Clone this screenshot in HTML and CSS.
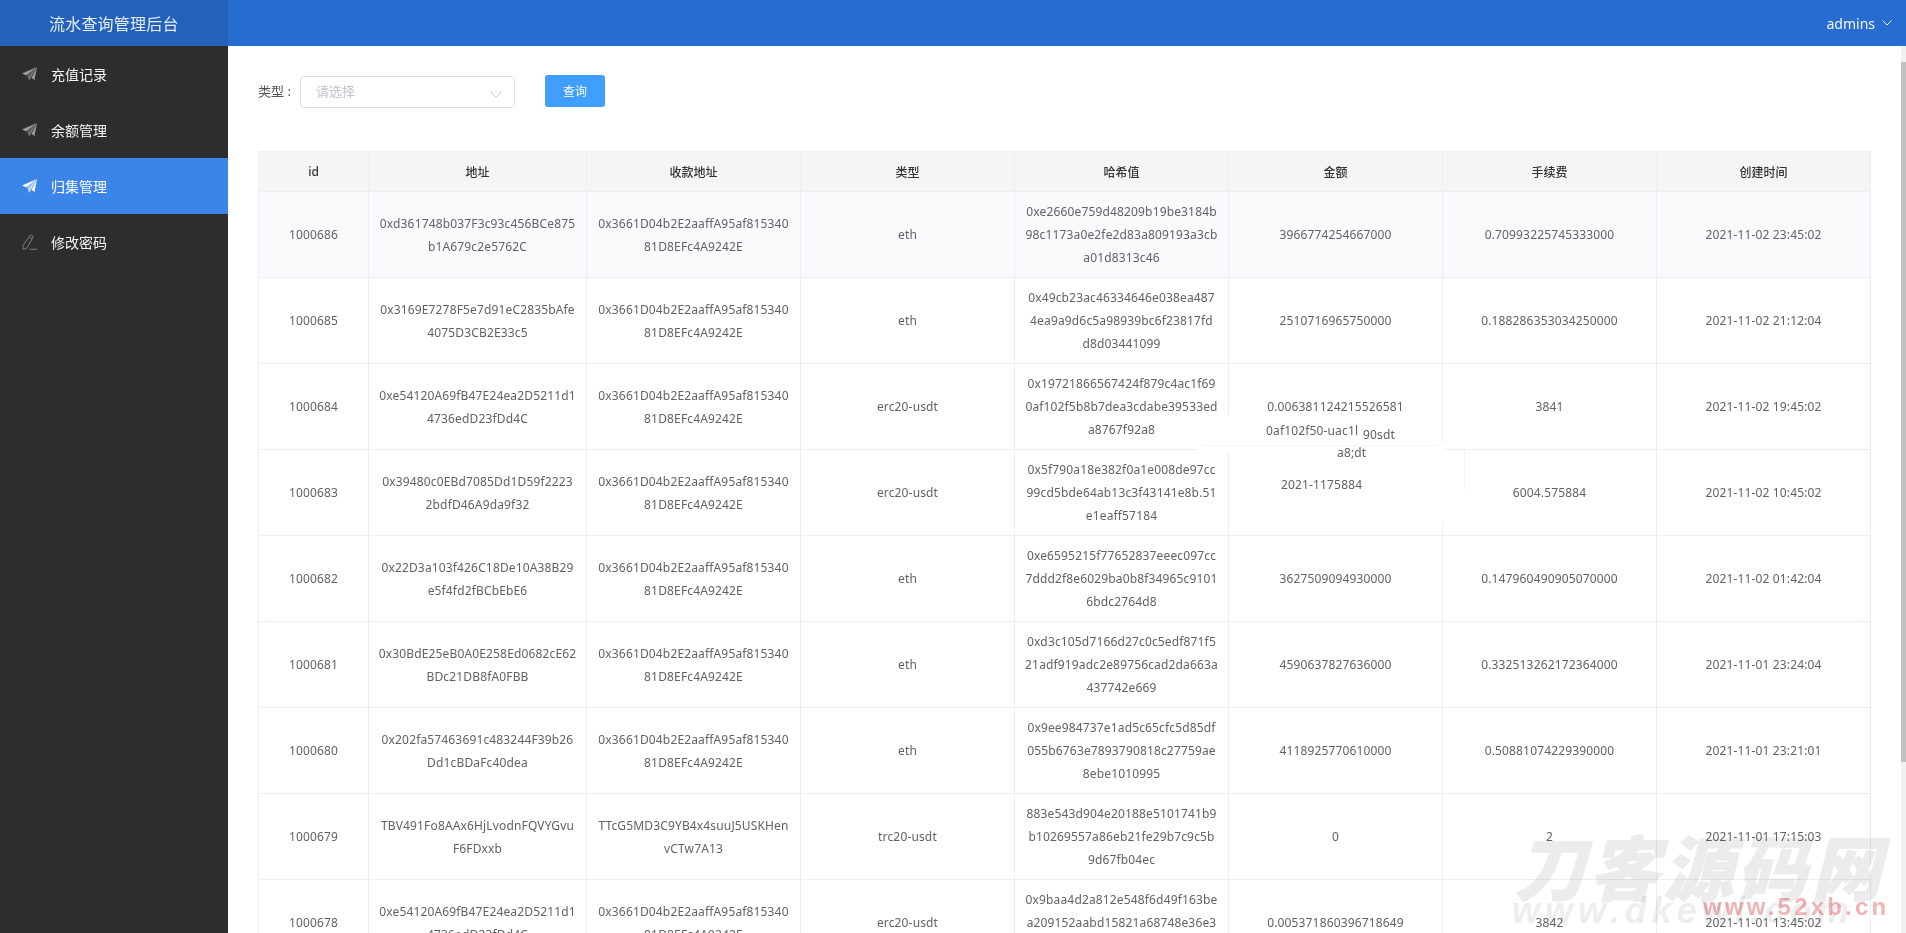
FILE: index.html
```html
<!DOCTYPE html>
<html lang="zh-CN">
<head>
<meta charset="utf-8">
<title>流水查询管理后台</title>
<link rel="stylesheet" href="styles.css">
</head>
<body>
<div class="app">
  <header class="topbar">
    <div class="logo">流水查询管理后台</div>
    <div class="user">admins
      <svg class="user-caret" viewBox="0 0 10 6"><path d="M0.5 0.5 5 5 9.5 0.5"/></svg>
    </div>
  </header>
  <div class="body">
    <nav class="sidebar">
      <a class="menu-item">
        <svg class="menu-icon" viewBox="0 0 15 14"><path d="M15 0 0 6.5 4.5 8.5Z"/><path class="facet" d="M15 0 5.5 9 7 14 8.8 11.3Z"/><path d="M15 0 9.6 11 12.5 13Z"/></svg>
        <span>充值记录</span>
      </a>
      <a class="menu-item">
        <svg class="menu-icon" viewBox="0 0 15 14"><path d="M15 0 0 6.5 4.5 8.5Z"/><path class="facet" d="M15 0 5.5 9 7 14 8.8 11.3Z"/><path d="M15 0 9.6 11 12.5 13Z"/></svg>
        <span>余额管理</span>
      </a>
      <a class="menu-item active">
        <svg class="menu-icon" viewBox="0 0 15 14"><path d="M15 0 0 6.5 4.5 8.5Z"/><path class="facet" d="M15 0 5.5 9 7 14 8.8 11.3Z"/><path d="M15 0 9.6 11 12.5 13Z"/></svg>
        <span>归集管理</span>
      </a>
      <a class="menu-item">
        <svg class="menu-icon pencil" viewBox="0 0 15 16"><path d="M8.5 0.8 11.3 2.6 4.6 14.6 1 15 1.2 11.3Z"/><path d="M7.3 3 10 4.8"/><path d="M7.5 15.3H15"/></svg>
        <span>修改密码</span>
      </a>
    </nav>
    <main class="main">
      <form class="filter">
        <label class="filter-label">类型 :</label>
        <div class="select">
          <span class="placeholder">请选择</span>
          <svg class="select-caret" viewBox="0 0 12 7"><path d="M0.5 0.5 6 6 11.5 0.5"/></svg>
        </div>
        <button type="button" class="btn">查询</button>
      </form>
      <table class="table">
        <colgroup>
          <col class="c-id"><col class="c-addr"><col class="c-to"><col class="c-rest"><col class="c-rest"><col class="c-rest"><col class="c-rest"><col class="c-rest">
        </colgroup>
        <thead>
          <tr><th>id</th><th>地址</th><th>收款地址</th><th>类型</th><th>哈希值</th><th>金额</th><th>手续费</th><th>创建时间</th></tr>
        </thead>
        <tbody>
          <tr class="hover">
            <td>1000686</td><td>0xd361748b037F3c93c456BCe875<br>b1A679c2e5762C</td><td>0x3661D04b2E2aaffA95af815340<br>81D8EFc4A9242E</td><td>eth</td><td>0xe2660e759d48209b19be3184b<br>98c1173a0e2fe2d83a809193a3cb<br>a01d8313c46</td><td>3966774254667000</td><td>0.70993225745333000</td><td>2021-11-02 23:45:02</td>
          </tr>
          <tr>
            <td>1000685</td><td>0x3169E7278F5e7d91eC2835bAfe<br>4075D3CB2E33c5</td><td>0x3661D04b2E2aaffA95af815340<br>81D8EFc4A9242E</td><td>eth</td><td>0x49cb23ac46334646e038ea487<br>4ea9a9d6c5a98939bc6f23817fd<br>d8d03441099</td><td>2510716965750000</td><td>0.188286353034250000</td><td>2021-11-02 21:12:04</td>
          </tr>
          <tr>
            <td>1000684</td><td>0xe54120A69fB47E24ea2D5211d1<br>4736edD23fDd4C</td><td>0x3661D04b2E2aaffA95af815340<br>81D8EFc4A9242E</td><td>erc20-usdt</td><td>0x19721866567424f879c4ac1f69<br>0af102f5b8b7dea3cdabe39533ed<br>a8767f92a8</td><td>0.006381124215526581</td><td>3841</td><td>2021-11-02 19:45:02</td>
          </tr>
          <tr>
            <td>1000683</td><td>0x39480c0EBd7085Dd1D59f2223<br>2bdfD46A9da9f32</td><td>0x3661D04b2E2aaffA95af815340<br>81D8EFc4A9242E</td><td>erc20-usdt</td><td>0x5f790a18e382f0a1e008de97cc<br>99cd5bde64ab13c3f43141e8b.51<br>e1eaff57184</td><td></td><td>6004.575884</td><td>2021-11-02 10:45:02</td>
          </tr>
          <tr>
            <td>1000682</td><td>0x22D3a103f426C18De10A38B29<br>e5f4fd2fBCbEbE6</td><td>0x3661D04b2E2aaffA95af815340<br>81D8EFc4A9242E</td><td>eth</td><td>0xe6595215f77652837eeec097cc<br>7ddd2f8e6029ba0b8f34965c9101<br>6bdc2764d8</td><td>3627509094930000</td><td>0.147960490905070000</td><td>2021-11-02 01:42:04</td>
          </tr>
          <tr>
            <td>1000681</td><td>0x30BdE25eB0A0E258Ed0682cE62<br>BDc21DB8fA0FBB</td><td>0x3661D04b2E2aaffA95af815340<br>81D8EFc4A9242E</td><td>eth</td><td>0xd3c105d7166d27c0c5edf871f5<br>21adf919adc2e89756cad2da663a<br>437742e669</td><td>4590637827636000</td><td>0.332513262172364000</td><td>2021-11-01 23:24:04</td>
          </tr>
          <tr>
            <td>1000680</td><td>0x202fa57463691c483244F39b26<br>Dd1cBDaFc40dea</td><td>0x3661D04b2E2aaffA95af815340<br>81D8EFc4A9242E</td><td>eth</td><td>0x9ee984737e1ad5c65cfc5d85df<br>055b6763e7893790818c27759ae<br>8ebe1010995</td><td>4118925770610000</td><td>0.50881074229390000</td><td>2021-11-01 23:21:01</td>
          </tr>
          <tr>
            <td>1000679</td><td>TBV491Fo8AAx6HjLvodnFQVYGvu<br>F6FDxxb</td><td>TTcG5MD3C9YB4x4suuJ5USKHen<br>vCTw7A13</td><td>trc20-usdt</td><td>883e543d904e20188e5101741b9<br>b10269557a86eb21fe29b7c9c5b<br>9d67fb04ec</td><td>0</td><td>2</td><td>2021-11-01 17:15:03</td>
          </tr>
          <tr>
            <td>1000678</td><td>0xe54120A69fB47E24ea2D5211d1<br>4736edD23fDd4C</td><td>0x3661D04b2E2aaffA95af815340<br>81D8EFc4A9242E</td><td>erc20-usdt</td><td>0x9baa4d2a812e548f6d49f163be<br>a209152aabd15821a68748e36e3<br>d1f04a7c92</td><td>0.005371860396718649</td><td>3842</td><td>2021-11-01 13:45:02</td>
          </tr>
        </tbody>
      </table>
    </main>
  </div>
  <div class="overlay">
    <svg class="patch" viewBox="0 0 290 120">
      <rect class="white" x="3" y="0" width="238" height="33"/>
      <rect class="white" x="32" y="28" width="215" height="80"/>
      <rect class="white" x="0" y="30" width="36" height="8"/>
      <rect class="faint" x="5" y="30" width="235" height="1"/>
      <rect class="stray" x="267" y="35" width="1" height="40"/>
    </svg>
    <span class="stray-text s1">0af102f50-uac1l</span>
    <span class="stray-text s2">90sdt</span>
    <span class="stray-text s3">a8;dt</span>
    <span class="stray-text s4">2021-1175884</span>
    <div class="wm-cn">刀客源码网</div>
    <div class="wm-en">www.dkewl.com</div>
    <div class="wm-red">www.52xb.cn</div>
    <div class="scroll-track"><div class="scroll-thumb"></div></div>
  </div>
</div>
</body>
</html>
```

FILE: styles.css
```css
* { box-sizing: border-box; }
html, body { margin: 0; height: 100%; overflow: hidden; }
body {
  font-family: "Noto Sans", "Noto Sans CJK SC", sans-serif;
  font-size: 12px;
  color: #606266;
  background: #fff;
}
.app {
  position: relative;
  display: flex;
  flex-direction: column;
  height: 100vh;
  overflow: hidden;
}

/* top bar */
.topbar {
  flex: none;
  height: 46px;
  display: flex;
  align-items: center;
  justify-content: space-between;
  background: #276dd1;
  color: #fff;
}
.logo {
  width: 228px;
  height: 100%;
  display: flex;
  align-items: center;
  padding-left: 49px;
  background: #2361ba;
  font-size: 16px;
  letter-spacing: 0.2px;
  color: #e6eefa;
}
.user {
  display: flex;
  align-items: center;
  gap: 7px;
  padding-right: 14px;
  font-size: 14px;
  color: #f2f6fd;
}
.user-caret { width: 10px; height: 6px; }
.user-caret path { fill: none; stroke: #e6eefa; stroke-width: 1; }

/* layout */
.body { flex: 1; min-height: 0; display: flex; }

/* sidebar */
.sidebar { flex: none; width: 228px; background: #2d2d2d; }
.menu-item {
  height: 56px;
  display: flex;
  align-items: center;
  gap: 14px;
  padding-left: 22px;
  font-size: 14px;
  color: #f4f4f4;
}
.menu-item.active { background: #3c85e8; color: #fff; }
.menu-icon { flex: none; width: 15px; height: 14px; fill: #9b9b9b; }
.menu-icon .facet { fill: #6f6f6f; }
.menu-item.active .menu-icon { fill: #fff; }
.menu-item.active .menu-icon .facet { fill: #b9dcfb; }
.menu-icon.pencil { height: 16px; fill: none; stroke: #7d7d7d; stroke-width: 1; }

/* main */
.main {
  flex: 1;
  min-width: 0;
  padding: 29px 30px 0;
  overflow: hidden;
}

/* filter */
.filter { display: flex; align-items: center; height: 32px; margin-bottom: 44px; }
.filter-label { width: 42px; font-size: 13px; color: #555; margin-top: -2px; }
.select {
  width: 215px;
  height: 32px;
  margin-top: 2px;
  display: flex;
  align-items: center;
  justify-content: space-between;
  padding: 0 12px 0 15px;
  border: 1px solid #dcdfe6;
  border-radius: 4px;
}
.placeholder { font-size: 13px; color: #c0c4cc; margin-top: -3px; }
.select-caret { width: 12px; height: 7px; margin-top: 4px; }
.select-caret path { fill: none; stroke: #c0c4cc; stroke-width: 1; }
.btn {
  width: 60px;
  height: 32px;
  margin-left: 30px;
  border: 0;
  border-radius: 3px;
  background: #409eff;
  color: #fff;
  font: inherit;
  padding: 0;
}

/* table */
.table {
  width: 1612px;
  table-layout: fixed;
  border-collapse: collapse;
  letter-spacing: 0.15px;
}
.c-id { width: 110px; }
.c-addr { width: 218px; }
.c-to { width: 214px; }
.c-rest { width: 214px; }
.table th, .table td {
  border: 1px solid #ebeef5;
  padding: 0 4px;
  text-align: center;
}
.table th {
  height: 40px;
  background: #f5f5f5;
  color: #333;
  font-weight: 500;
  letter-spacing: 0;
  border-color: #eeeeee;
}
.table td { height: 86px; line-height: 23px; }
.table tr.hover td { background: #f9fafc; }

/* things lying over the table */
.overlay { position: absolute; inset: 0; pointer-events: none; }
.patch { position: absolute; left: 1197px; top: 415px; width: 290px; height: 120px; }
.patch .white { fill: #fff; }
.patch .faint { fill: #f4f5f8; }
.patch .stray { fill: #f1f3f7; }
.stray-text {
  position: absolute;
  color: #606266;
  letter-spacing: 0.15px;
  line-height: 16px;
  white-space: nowrap;
}
.s1 { left: 1266px; top: 423px; }
.s2 { left: 1363px; top: 427px; }
.s3 { left: 1337px; top: 445px; }
.s4 { left: 1281px; top: 477px; }

/* watermark */
.wm-cn, .wm-en, .wm-red {
  position: absolute;
  white-space: nowrap;
  mix-blend-mode: multiply;
}
.wm-cn {
  left: 1515px;
  top: 820px;
  font-family: "Noto Sans CJK SC", sans-serif;
  font-size: 70px;
  font-weight: 900;
  font-style: italic;
  line-height: 90px;
  letter-spacing: 4px;
  color: #ececec;
  -webkit-text-stroke: 1px #ececec;
}
.wm-en {
  left: 1512px;
  top: 891px;
  font-family: "Liberation Sans", sans-serif;
  font-size: 36px;
  font-weight: 700;
  font-style: italic;
  line-height: 40px;
  letter-spacing: 5px;
  color: #eeeeee;
}
.wm-red {
  left: 1703px;
  top: 893px;
  font-family: "Liberation Sans", sans-serif;
  font-size: 24px;
  font-weight: 700;
  line-height: 28px;
  letter-spacing: 3.2px;
  color: #f0b4b6;
}

/* page scrollbar */
.scroll-track {
  position: absolute;
  right: 0;
  top: 46px;
  bottom: 0;
  width: 5px;
  padding-top: 16px;
  background: #f1f1f1;
}
.scroll-thumb { height: 700px; background: #c1c1c1; }
```
